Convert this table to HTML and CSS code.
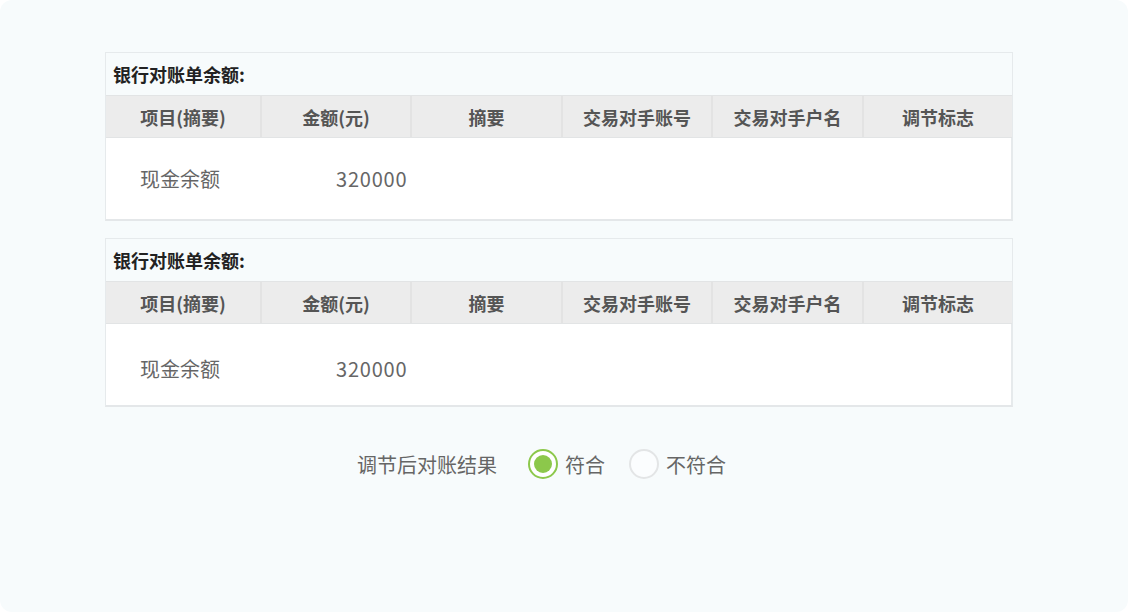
FILE: index.html
```html
<!DOCTYPE html>
<html lang="zh-CN">
<head>
<meta charset="utf-8">
<link rel="stylesheet" href="styles.css">
</head>
<body>
<div class="page">
  <section class="panel">
    <div class="panel-title">银行对账单余额:</div>
    <div class="grid head">
      <div class="cell">项目(摘要)</div>
      <div class="cell">金额(元)</div>
      <div class="cell">摘要</div>
      <div class="cell">交易对手账号</div>
      <div class="cell">交易对手户名</div>
      <div class="cell">调节标志</div>
    </div>
    <div class="grid body-row">
      <div class="bcell name">现金余额</div>
      <div class="bcell amount">320000</div>
      <div class="bcell"></div>
      <div class="bcell"></div>
      <div class="bcell"></div>
      <div class="bcell"></div>
    </div>
  </section>
  <section class="panel">
    <div class="panel-title">银行对账单余额:</div>
    <div class="grid head">
      <div class="cell">项目(摘要)</div>
      <div class="cell">金额(元)</div>
      <div class="cell">摘要</div>
      <div class="cell">交易对手账号</div>
      <div class="cell">交易对手户名</div>
      <div class="cell">调节标志</div>
    </div>
    <div class="grid body-row">
      <div class="bcell name">现金余额</div>
      <div class="bcell amount">320000</div>
      <div class="bcell"></div>
      <div class="bcell"></div>
      <div class="bcell"></div>
      <div class="bcell"></div>
    </div>
  </section>
  <div class="result">
    <span class="result-label">调节后对账结果</span>
    <label class="radio checked"><span class="dot"></span>符合</label>
    <label class="radio"><span class="dot"></span>不符合</label>
  </div>
</div>
</body>
</html>
```
FILE: styles.css
```css
html { background: #ffffff; }
body {
  margin: 0;
  width: 1128px;
  height: 612px;
  background: #f7fbfc;
  border-radius: 12px;
  font-family: "Noto Sans CJK SC", "Noto Sans", sans-serif;
  overflow: hidden;
}
.page {
  padding: 52px 0 0 105px;
  display: flex;
  flex-direction: column;
  gap: 17px;
}
.panel {
  width: 908px;
  box-sizing: border-box;
  border: 1px solid #e6eaec;
  border-bottom: 2px solid #e4e7e9;
  background: #f7fbfc;
}
.panel-title {
  height: 42px;
  line-height: 42px;
  padding-left: 7px;
  font-size: 18px;
  font-weight: 700;
  color: #222;
}
.grid {
  display: grid;
  grid-template-columns: 156px 150px 151px 150px 151px 1fr;
}
.head {
  height: 43px;
  background: #ececec;
  border-top: 1px solid #e2e4e5;
  border-bottom: 1px solid #e2e4e5;
  box-sizing: border-box;
}
.cell {
  display: flex;
  align-items: center;
  justify-content: center;
  padding-top: 1px;
  font-size: 18px;
  font-weight: 700;
  color: #555;
  border-right: 2px solid #e3e3e3;
}
.cell:last-child { border-right: none; }
.body-row {
  height: 81px;
  background: #ffffff;
  border-right: 1px solid #e6eaec;
}
.bcell {
  display: flex;
  align-items: center;
  font-size: 20px;
  color: #666;
}
.panel + .panel .bcell { padding-top: 7px; }
.name { padding-left: 34px; }
.amount { padding-left: 74px; letter-spacing: 0.8px; }
.result {
  display: flex;
  align-items: center;
  margin-top: 23px;
  padding-left: 252px;
  font-size: 20px;
  color: #666;
  height: 34px;
}
.result-label { margin-right: 31px; }
.radio {
  display: flex;
  align-items: center;
  gap: 7px;
  margin-right: 24px;
}
.dot {
  width: 30px;
  height: 30px;
  box-sizing: border-box;
  border-radius: 50%;
  border: 2px solid #e3e5e6;
  background: #fbfdfe;
  display: flex;
  align-items: center;
  justify-content: center;
}
.checked .dot {
  border-color: #8cc84b;
  background: #ffffff;
}
.checked .dot::after {
  content: "";
  width: 18px;
  height: 18px;
  border-radius: 50%;
  background: #8cc84b;
}
```
